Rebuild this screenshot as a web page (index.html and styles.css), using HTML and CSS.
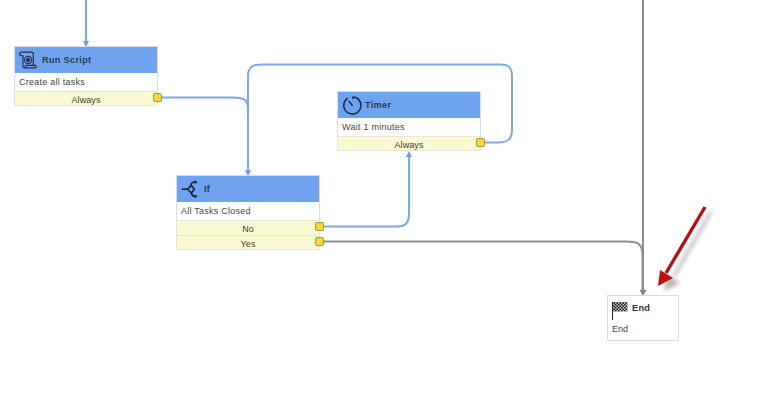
FILE: index.html
```html
<!DOCTYPE html>
<html lang="en">
<head>
<meta charset="utf-8">
<title>Workflow</title>
<link rel="stylesheet" href="styles.css">
</head>
<body>
<main class="canvas">
  <svg class="wires" width="767" height="407" viewBox="0 0 767 407" fill="none">
    <defs>
      <filter id="soft" x="-30%" y="-30%" width="160%" height="160%"><feGaussianBlur stdDeviation="2.2"/></filter>
    </defs>
    <g class="wire-blue">
      <path d="M86 0V43"/>
      <path d="M162 97.500H232C243 97.500 248 99 248 108V172"/>
      <path d="M485 142.500H498C508 142.500 512 139 512 130V76C512 68 509 64.500 501 64.500H266C256 64.500 250 64 248 74V172"/>
      <path d="M324 226.500H398C405 226.500 409 222 409 214V155"/>
    </g>
    <g class="tips-blue">
      <path d="M83 41H89L86 47Z"/>
      <path d="M245 170H251L248 176Z"/>
      <path d="M406 157H412L409 151Z"/>
    </g>
    <g class="wire-gray">
      <path d="M643 0V292"/>
      <path d="M324 241.500H626C637 241.500 642 243 642.500 254V292"/>
    </g>
    <path class="tip-gray" d="M639.500 290H646.500L643 296Z"/>
    <g class="pointer-shadow" filter="url(#soft)">
      <path d="M711 212L674 276"/>
      <path class="pointer-shadow-head" d="M664 291L667 275L680 283Z"/>
    </g>
    <path class="pointer-line" d="M705 207L666 273"/>
    <path class="pointer-head" d="M658 286L660 270L673 278Z"/>
  </svg>

  <article class="node node-script">
    <header class="node-head">
      <svg class="icon" width="24" height="24" viewBox="0 0 29 29" fill="none" stroke="#1d2f4f" stroke-width="1.400">
        <path d="M2 7.500C2 5.500 3 5 5 5H16C18 5 18.500 6 18.500 7V20.500"/>
        <path d="M2 7.500C2 9 3 9.500 6 9.500V22C6 23.500 7 24 8 24H21C22.500 24 22.500 21 21 21H10C8.500 21 8.500 24 8 24"/>
        <circle cx="12.300" cy="14.500" r="4.300"/>
        <circle cx="12.300" cy="14.500" r="1.800" fill="#1d2f4f"/>
      </svg>
      <span class="node-title">Run Script</span>
    </header>
    <p class="node-desc">Create all tasks</p>
    <div class="node-opt">Always<i class="handle"></i></div>
  </article>

  <article class="node node-if">
    <header class="node-head">
      <svg class="icon" width="24" height="24" viewBox="0 0 28.500 28.500" fill="none" stroke="#14233f" stroke-width="1.900">
        <path d="M2 14.500H9"/>
        <path d="M9 14.500L13.500 10L17 14.500L13.500 19Z"/>
        <path d="M13 10C13 8 14 6 18 6"/>
        <path d="M13.500 19C14 21.500 15 23 18 23"/>
        <path d="M17.500 3.800L21 6L17.500 8.200Z" fill="#14233f" stroke="none"/>
        <path d="M17.500 20.800L21 23L17.500 25.200Z" fill="#14233f" stroke="none"/>
      </svg>
      <span class="node-title">If</span>
    </header>
    <p class="node-desc">All Tasks Closed</p>
    <div class="node-opt">No<i class="handle"></i></div>
    <div class="node-opt">Yes<i class="handle"></i></div>
  </article>

  <article class="node node-timer">
    <header class="node-head">
      <svg class="icon" width="24" height="24" viewBox="0 0 26 26" fill="none" stroke="#14233f" stroke-width="1.600">
        <path d="M7.500 5.500A9.300 9.300 0 1 0 14 4.300"/>
        <path d="M8.500 8.500L12.500 14"/>
        <path d="M13 3.800V6.500"/>
      </svg>
      <span class="node-title">Timer</span>
    </header>
    <p class="node-desc">Wait 1 minutes</p>
    <div class="node-opt">Always<i class="handle"></i></div>
  </article>

  <article class="node node-end">
    <header class="end-head">
      <svg class="flag" width="16" height="20" viewBox="0 0 16 20">
        <defs>
          <pattern id="checks" width="3" height="3" patternUnits="userSpaceOnUse">
            <rect width="3" height="3" fill="#c8c8c8"/>
            <rect width="1.500" height="1.500" fill="#111"/>
            <rect x="1.500" y="1.500" width="1.500" height="1.500" fill="#111"/>
          </pattern>
        </defs>
        <rect class="flag-pole" x="0" y="1" width="1" height="18"/>
        <rect x="1" y="1" width="14.500" height="9.500" fill="url(#checks)"/>
      </svg>
      <span class="node-title">End</span>
    </header>
    <p class="end-desc">End</p>
  </article>
</main>
</body>
</html>
```
FILE: styles.css
```css
* { box-sizing: border-box; }

html, body {
  margin: 0;
  padding: 0;
  background: #fff;
}

.canvas {
  position: relative;
  width: 767px;
  height: 407px;
  overflow: hidden;
  font-family: "Liberation Sans", Arial, sans-serif;
  color: #333;
}

.wires {
  position: absolute;
  left: 0;
  top: 0;
}

.wire-blue path {
  stroke: #7aa9e6;
  stroke-width: 2;
}

.tips-blue path { fill: #6a9ee6; }

.wire-gray path {
  stroke: #8f8f8f;
  stroke-width: 2;
}

.tip-gray { fill: #858585; }

.pointer-shadow path {
  stroke: #b5b5b5;
  stroke-width: 3;
}

.pointer-shadow .pointer-shadow-head {
  fill: #b5b5b5;
  stroke: none;
}

.pointer-line {
  stroke: #b80f14;
  stroke-width: 3.400;
  fill: none;
}

.pointer-head { fill: #c00d12; }

.node {
  position: absolute;
  display: flex;
  flex-direction: column;
  width: 144px;
  background: #fff;
  border: 1px solid #dcdcdc;
  border-top: 0;
}

.node-script { left: 14px; top: 46px; }
.node-if { left: 176px; top: 175px; }
.node-timer { left: 337px; top: 91px; }

.node-head {
  display: flex;
  align-items: center;
  height: 27px;
  margin: 0 -1px;
  padding-left: 3px;
  padding-bottom: 1px;
  background: #6fa3ef;
  border: 1px solid #dcdcdc;
  border-bottom: 0;
  background-clip: padding-box;
}

.icon { flex: none; }

.node-title {
  font-size: 9.200px;
  font-weight: 700;
  letter-spacing: 0.300px;
  color: #2f3d52;
}

.node-desc {
  margin: 0;
  height: 18px;
  padding-left: 4px;
  font-size: 9px;
  line-height: 18px;
  letter-spacing: 0.250px;
  color: #444;
}

.node-opt {
  position: relative;
  height: 15px;
  margin: 0 -1px;
  background: #fafad2;
  border: 1px solid #e6e6dc;
  border-bottom-width: 0;
  font-size: 9px;
  line-height: 17px;
  text-align: center;
  letter-spacing: 0.100px;
  color: #3c3c30;
}

.node-opt:last-child { border-bottom-width: 1px; margin-bottom: -1px; }

.handle {
  position: absolute;
  right: -5px;
  top: 1px;
  width: 9px;
  height: 9px;
  background: #f5d63d;
  border: 1px solid #a89a3c;
  border-radius: 2px;
}

.node-end {
  left: 607px;
  top: 295px;
  width: 72px;
  height: 46px;
  border: 1px solid #dcdcdc;
  padding: 5px 4px 0;
}

.end-head {
  display: flex;
  align-items: flex-start;
  gap: 4px;
  height: 22px;
}

.end-head .node-title {
  line-height: 14px;
  color: #333;
}

.flag { flex: none; }
.flag-pole { fill: #222; }

.end-desc {
  margin: 0;
  font-size: 9px;
  line-height: 12px;
  color: #444;
}
```
